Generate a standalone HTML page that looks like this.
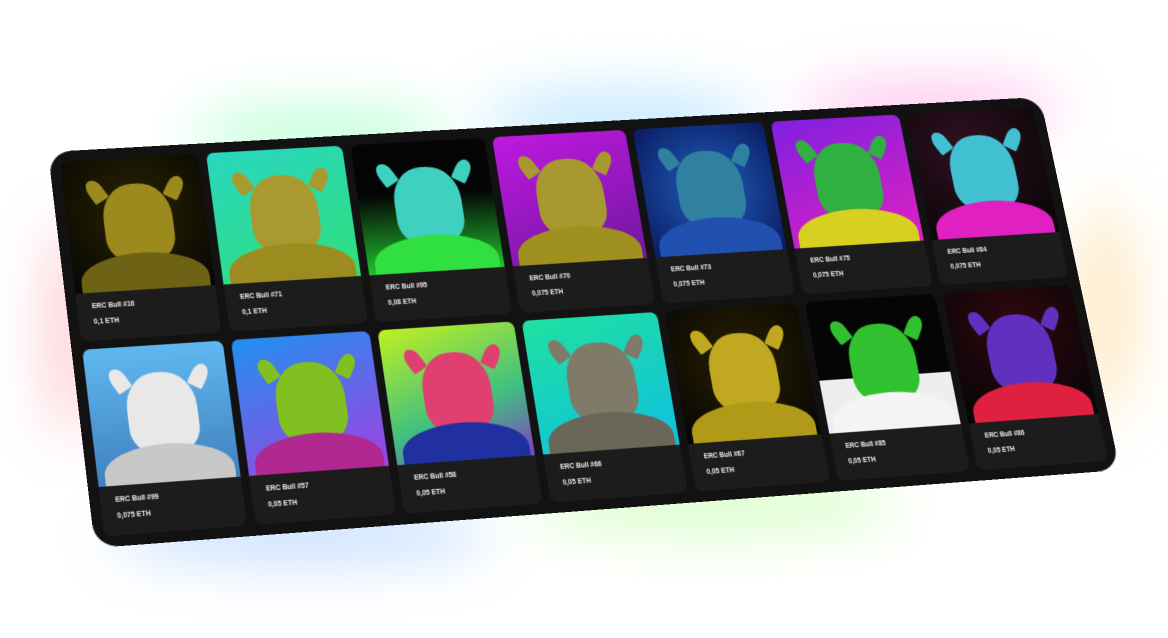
<!DOCTYPE html>
<html><head><meta charset="utf-8"><style>
html,body{margin:0;padding:0;background:#fff;width:1168px;height:638px;overflow:hidden;font-family:"Liberation Sans",sans-serif}
.glow{position:absolute;filter:blur(28px);border-radius:50%;opacity:.55}
.panel{position:absolute;left:0;top:0;width:1000px;height:380px;background:#121212;border-radius:22px;transform-origin:0 0;
transform:matrix3d(1.04821,-0.04976,0,0.00005405,0.11458,0.98961,0,-0.00009582,0,0,1,0,48,152,0,1);
box-sizing:border-box;padding:10px;display:grid;grid-template-columns:repeat(7,1fr);grid-template-rows:1fr 1fr;gap:8px}
.c{background:#1c1c1c;border-radius:7px;overflow:hidden;display:flex;flex-direction:column}
.im{height:130px;position:relative;overflow:hidden}
.im i{position:absolute;left:26%;top:20%;width:50%;height:58%;border-radius:45% 45% 30% 30%}
.im i:before,.im i:after{content:"";position:absolute;top:-8%;width:22%;height:30%;background:inherit;border-radius:50% 50% 10% 10%}
.im i:before{left:-18%;transform:rotate(-30deg)}
.im i:after{right:-18%;transform:rotate(30deg)}
.im b{position:absolute;left:5%;bottom:-12%;width:92%;height:40%;border-radius:50% 50% 0 0}
.t{color:#eee;font-size:6.5px;font-weight:bold;padding:10px 0 0 14px}
.p{color:#eee;font-size:6.5px;font-weight:bold;padding:8px 0 0 14px}
</style></head><body>
<div class="glow" style="left:190px;top:110px;width:260px;height:50px;background:#7fffb0"></div>
<div class="glow" style="left:480px;top:95px;width:280px;height:50px;background:#80d0ff"></div>
<div class="glow" style="left:800px;top:85px;width:260px;height:50px;background:#ff90e0"></div>
<div class="glow" style="left:1080px;top:200px;width:50px;height:220px;background:#ffd080"></div>
<div class="glow" style="left:110px;top:510px;width:380px;height:50px;background:#90c0ff"></div>
<div class="glow" style="left:520px;top:480px;width:380px;height:50px;background:#b0ff90"></div>
<div class="glow" style="left:50px;top:220px;width:40px;height:220px;background:#ff90a0"></div>
<div class="panel">
<div class="c"><div class="im" style="background:radial-gradient(circle at 50% 40%,#2a2400,#050505)"><i style="background:#9c8a1e"></i><b style="background:#6e6214"></b></div><div class="t">ERC Bull #16</div><div class="p">0,1 ETH</div></div>
<div class="c"><div class="im" style="background:linear-gradient(160deg,#2ad6c0,#2ee07a)"><i style="background:#a89a30"></i><b style="background:#9c8c20"></b></div><div class="t">ERC Bull #71</div><div class="p">0,1 ETH</div></div>
<div class="c"><div class="im" style="background:linear-gradient(180deg,#050505 40%,#22c030)"><i style="background:#40d0c0"></i><b style="background:#30e040"></b></div><div class="t">ERC Bull #95</div><div class="p">0,08 ETH</div></div>
<div class="c"><div class="im" style="background:linear-gradient(160deg,#c018e0,#7018a0)"><i style="background:#a89830"></i><b style="background:#a09020"></b></div><div class="t">ERC Bull #70</div><div class="p">0,075 ETH</div></div>
<div class="c"><div class="im" style="background:radial-gradient(circle at 50% 50%,#2060c0,#0a1a60)"><i style="background:#3080a0"></i><b style="background:#2050b0"></b></div><div class="t">ERC Bull #73</div><div class="p">0,075 ETH</div></div>
<div class="c"><div class="im" style="background:linear-gradient(160deg,#8020e0,#e020c0)"><i style="background:#30b040"></i><b style="background:#d8d020"></b></div><div class="t">ERC Bull #75</div><div class="p">0,075 ETH</div></div>
<div class="c"><div class="im" style="background:radial-gradient(circle at 40% 30%,#301020,#050505)"><i style="background:#40c0d0"></i><b style="background:#e020c0"></b></div><div class="t">ERC Bull #84</div><div class="p">0,075 ETH</div></div>
<div class="c"><div class="im" style="background:linear-gradient(180deg,#60b8f0,#4080c0)"><i style="background:#e8e8e8"></i><b style="background:#c8c8c8"></b></div><div class="t">ERC Bull #99</div><div class="p">0,075 ETH</div></div>
<div class="c"><div class="im" style="background:linear-gradient(160deg,#2090f0,#a040e0)"><i style="background:#80c020"></i><b style="background:#b02890"></b></div><div class="t">ERC Bull #57</div><div class="p">0,05 ETH</div></div>
<div class="c"><div class="im" style="background:linear-gradient(160deg,#c0f020,#40c080 60%,#8040c0)"><i style="background:#e04070"></i><b style="background:#2030a0"></b></div><div class="t">ERC Bull #58</div><div class="p">0,05 ETH</div></div>
<div class="c"><div class="im" style="background:linear-gradient(160deg,#20e0a0,#10c0e0)"><i style="background:#807a68"></i><b style="background:#6a6658"></b></div><div class="t">ERC Bull #66</div><div class="p">0,05 ETH</div></div>
<div class="c"><div class="im" style="background:radial-gradient(circle at 50% 40%,#2a2000,#050505)"><i style="background:#c0a820"></i><b style="background:#b09a18"></b></div><div class="t">ERC Bull #67</div><div class="p">0,05 ETH</div></div>
<div class="c"><div class="im" style="background:linear-gradient(180deg,#050505 60%,#eee 60%)"><i style="background:#30c030"></i><b style="background:#f4f4f4"></b></div><div class="t">ERC Bull #85</div><div class="p">0,05 ETH</div></div>
<div class="c"><div class="im" style="background:radial-gradient(circle at 50% 30%,#300810,#050505)"><i style="background:#6030c0"></i><b style="background:#e02040"></b></div><div class="t">ERC Bull #86</div><div class="p">0,05 ETH</div></div>
</div>
</body></html>
